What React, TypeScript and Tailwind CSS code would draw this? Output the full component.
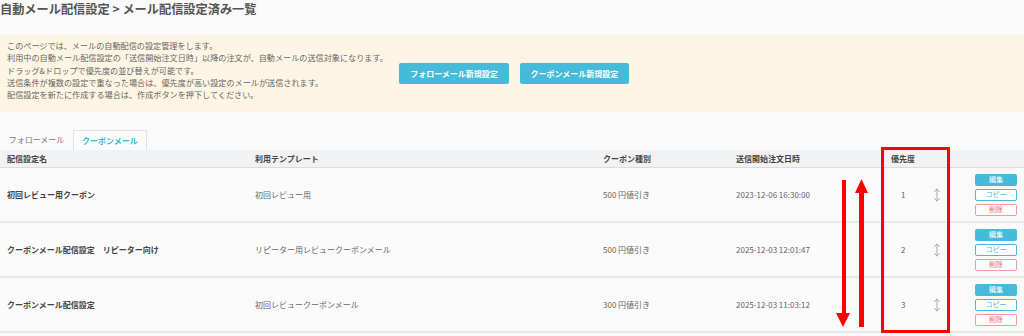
const rows = [
  { name: "初回レビュー用クーポン", template: "初回レビュー用", kind: "500 円値引き", date: "2023-12-06 16:30:00", prio: 1 },
  { name: "クーポンメール配信設定　リピーター向け", template: "リピーター用レビュークーポンメール", kind: "500 円値引き", date: "2025-12-03 12:01:47", prio: 2 },
  { name: "クーポンメール配信設定", template: "初回レビュークーポンメール", kind: "300 円値引き", date: "2025-12-03 11:03:12", prio: 3 },
]

const notes = [
  "このページでは、メールの自動配信の設定管理をします。",
  "利用中の自動メール配信設定の「送信開始注文日時」以降の注文が、自動メールの送信対象になります。",
  "ドラッグ&ドロップで優先度の並び替えが可能です。",
  "送信条件が複数の設定で重なった場合は、優先度が高い設定のメールが送信されます。",
  "配信設定を新たに作成する場合は、作成ボタンを押下してください。",
]

const cols = "grid grid-cols-[248px_348px_133px_155px_83px_1fr]"

const DragIcon = () => (
  <svg width="8" height="14" viewBox="0 0 8 14" fill="none" stroke="#a8a8a8" strokeWidth="1" strokeLinecap="round">
    <path d="M4 1 V13" />
    <path d="M1.5 3.5 L4 1 L6.5 3.5" />
    <path d="M1.5 10.5 L4 13 L6.5 10.5" />
  </svg>
)

const App = () => {
  return (
    <div className="relative w-[1024px] h-[336px] overflow-hidden bg-[#fafafa] font-['Noto_Sans_CJK_JP','Noto_Sans',sans-serif]">
      <h1 className="h-[35px] pt-px text-[12.2px] leading-[16px] font-bold text-[#555]">
        自動メール配信設定 &gt; メール配信設定済み一覧
      </h1>

      <div className="h-[77px] bg-[#fdf5e3] flex">
        <div className="w-[399px] pl-[7px] pt-[5px] text-[8.15px] leading-[12.3px] text-[#666]">
          {notes.map((n) => (
            <p key={n}>{n}</p>
          ))}
        </div>
        <div className="flex gap-[11px] pt-[28px]">
          <button className="w-[110px] h-[21px] rounded-[2px] bg-[#46bbd9] text-white text-[8px] font-bold">
            フォローメール新規設定
          </button>
          <button className="w-[109px] h-[21px] rounded-[2px] bg-[#46bbd9] text-white text-[8px] font-bold">
            クーポンメール新規設定
          </button>
        </div>
      </div>

      <div className="mt-[18px] flex h-[20px] text-[8px]">
        <div className="w-[73px] flex items-center justify-center text-[#777]">フォローメール</div>
        <div className="w-[74px] flex items-center justify-center border border-b-0 border-[#e2e2e2] bg-[#fbfbfb] font-bold text-[#3fb3d6]">
          クーポンメール
        </div>
      </div>

      <div className={`${cols} h-[18px] items-center bg-[#f1f2f4] border-b border-[#dcdcdc] text-[8px] font-bold text-[#444]`}>
        <div className="pl-[7px]">配信設定名</div>
        <div className="pl-[7px]">利用テンプレート</div>
        <div className="pl-[7px]">クーポン種別</div>
        <div className="pl-[7px]">送信開始注文日時</div>
        <div className="pl-[7px]">優先度</div>
        <div />
      </div>

      {rows.map((r) => (
        <div key={r.prio} className={`${cols} h-[55px] items-center border-b-2 border-[#e9e9e9] text-[8px] text-[#666]`}>
          <div className="pl-[7px] font-bold text-[#444]">{r.name}</div>
          <div className="pl-[7px]">{r.template}</div>
          <div className="pl-[7px]">{r.kind}</div>
          <div className="pl-[7px]">{r.date}</div>
          <div className="flex items-center">
            <span className="pl-[17px] w-[49px]">{r.prio}</span>
            <DragIcon />
          </div>
          <div className="flex flex-col gap-[3px] pl-[8px]">
            <button className="w-[42px] h-[12px] rounded-[2px] bg-[#46bbd9] text-white text-[7px] leading-none">編集</button>
            <button className="w-[42px] h-[12px] rounded-[2px] border border-[#46bbd9] bg-white text-[#46bbd9] text-[7px] leading-none">コピー</button>
            <button className="w-[42px] h-[12px] rounded-[2px] border border-[#f19a9a] bg-white text-[#e46b6b] text-[7px] leading-none">削除</button>
          </div>
        </div>
      ))}

      {/* annotation: red box + arrows */}
      <div className="absolute left-[881px] top-[147px] w-[69px] h-[186px] border-[3px] border-[#ff0000]" />
      <svg className="absolute left-[830px] top-[175px]" width="45" height="160" viewBox="0 0 45 160">
        <rect x="12" y="5" width="4" height="134" fill="#ff0000" />
        <polygon points="6,138 20,138 13,152" fill="#ff0000" />
        <rect x="29" y="17" width="5" height="135" fill="#ff0000" />
        <polygon points="25,18 38,18 31.5,4" fill="#ff0000" />
      </svg>
    </div>
  )
}

export default App
